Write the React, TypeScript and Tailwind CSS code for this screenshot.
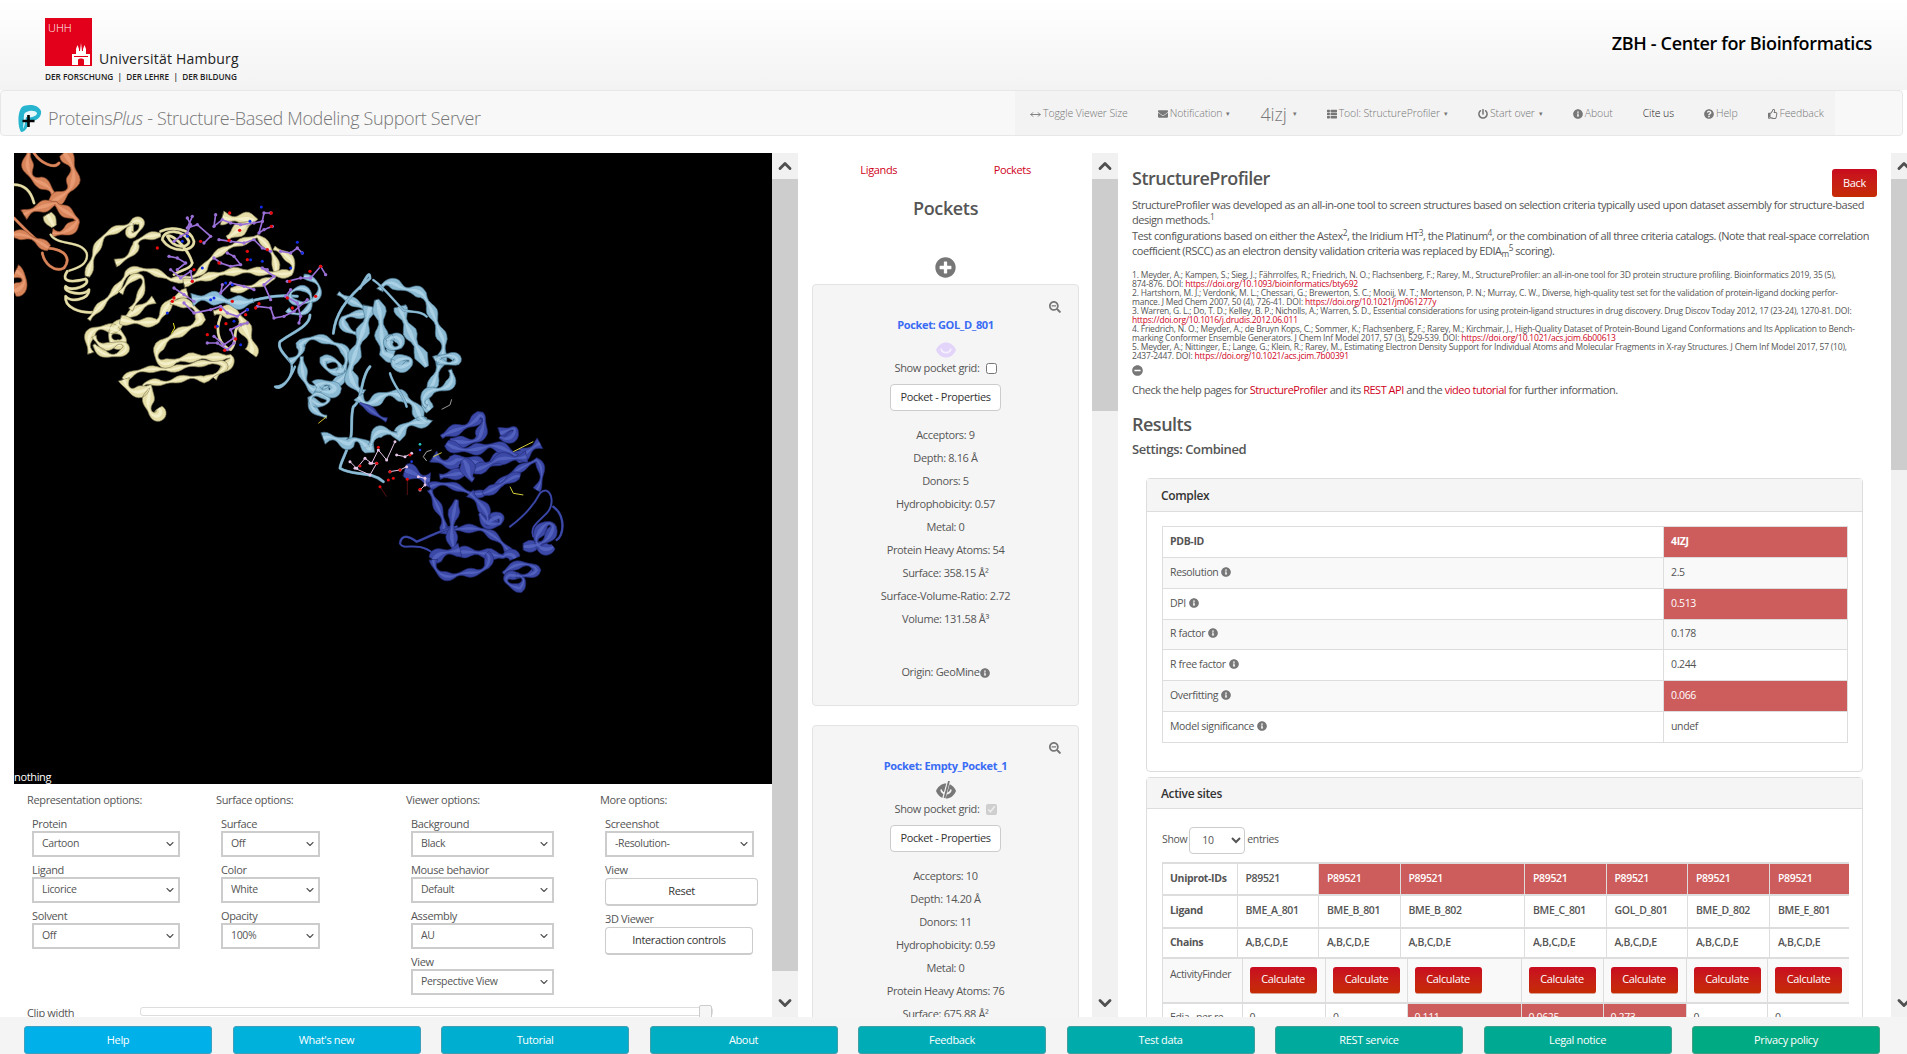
import React from 'react';
import { ChevronDown, ChevronUp, MoveHorizontal } from 'lucide-react';
import {
  FaEnvelope,
  FaInfoCircle,
  FaMinusCircle,
  FaPlusCircle,
  FaPowerOff,
  FaQuestionCircle,
  FaRegThumbsUp,
  FaSearchMinus,
  FaThList,
} from 'react-icons/fa';

type Ribbon = [string, number];
type Pt = [number, number];

const orange: Ribbon[] = [
  ['M45 0 C35 30 40 70 70 85 C100 95 120 110 125 150', 12],
  ['M150 0 C175 30 190 60 170 105 C150 130 130 135 110 150', 14],
  ['M30 185 C60 165 110 155 125 150 C135 170 190 190 190 205 C170 235 140 245 115 240', 12],
  ['M0 195 C30 225 60 260 100 285 C160 290 170 320 150 345 C120 360 90 330 85 300', 5],
  ['M0 245 C40 240 70 265 105 285', 10],
  ['M5 355 C40 370 40 400 0 415', 14],
  ['M60 0 C80 30 120 50 135 30', 5],
];

const cream: Ribbon[] = [
  ['M0 95 C30 95 50 110 60 150', 5],
  ['M100 185 L120 220', 12],
  ['M110 245 C130 280 200 260 218 300 C225 335 190 345 160 355', 4],
  ['M160 355 C145 375 150 395 215 378 C235 395 170 420 155 400 C145 420 210 430 225 410 C225 440 170 450 155 430 C150 465 200 480 235 478', 5],
  ['M220 370 C235 320 245 280 270 250 C300 225 340 225 360 205 C390 195 390 225 360 245 C340 250 345 235 355 210', 8],
  ['M305 330 C340 320 370 290 365 270 C390 245 415 250 440 245', 8],
  ['M225 500 C260 450 310 420 340 360 C370 340 420 350 470 380 C530 380 550 370 570 345 C600 290 680 270 730 250 C770 280 800 330 780 375 C730 395 700 410 650 410', 8],
  ['M440 235 C470 220 530 225 540 265 C540 300 470 300 445 260 C450 225 510 230 525 265 C525 285 480 290 460 250 C470 240 520 280 535 330 C530 350 500 350 480 365', 5],
  ['M510 390 C560 380 640 350 700 355 C740 350 790 370 830 360 C850 335 830 310 780 285', 9],
  ['M230 600 C215 560 225 530 260 525 C300 520 330 540 330 560 C320 590 280 570 290 540 C330 490 370 470 420 440', 10],
  ['M240 575 C260 610 310 620 335 590 C340 570 320 565 300 575 C270 590 250 575 240 550', 8],
  ['M320 500 C360 510 400 510 430 505 C440 500 460 430 520 420', 10],
  ['M320 420 C340 390 350 370 375 370 C400 370 390 420 350 470', 7],
  ['M470 450 C510 450 540 440 560 500 C540 530 460 540 430 590 C420 620 440 640 470 630 C540 600 590 620 650 610 C660 630 630 640 600 675', 10],
  ['M330 680 C360 650 400 645 470 650 C520 640 560 625 620 630 C650 640 620 660 570 680 C520 660 480 690 440 690 C400 680 370 700 400 710', 7],
  ['M330 680 C340 720 370 730 410 700 C405 740 395 750 410 780 C425 800 450 785 435 765', 12],
  ['M600 480 C630 470 680 470 690 520 C710 560 720 590 710 600', 14],
  ['M620 490 C600 540 620 580 650 590 C680 560 640 520 700 510', 5],
  ['M625 195 C640 200 680 195 720 200 L640 255', 14],
];

const skyLeft: Ribbon[] = [
  ['M720 442 C770 430 800 425 850 430', 5],
  ['M870 370 C920 380 930 420 900 440 C860 460 820 450 830 420 C860 390 900 410 890 450 C880 490 840 490 820 470', 6],
  ['M535 440 C580 430 610 435 640 445 C680 452 700 448 718 442', 14],
];

const sky: Ribbon[] = [
  ['M120 165 C120 200 60 220 30 245 C20 265 50 290 65 310', 5],
  ['M65 310 C70 350 45 380 15 380 C30 395 60 360 75 320', 4],
  ['M60 305 C90 290 100 270 90 255 C120 225 150 230 190 250 C230 260 240 290 220 330 C190 345 160 330 160 300 C190 290 220 310 210 340', 9],
  ['M95 290 C95 340 100 370 130 390 C180 385 210 370 235 330', 10],
  ['M120 410 C130 440 170 440 175 420 C170 400 130 390 120 420 C125 460 165 470 170 470', 8],
  ['M140 380 C160 360 190 370 195 385 C190 400 160 400 140 385', 14],
  ['M205 100 C240 125 280 135 290 155 C280 170 250 155 220 175 C210 200 240 220 280 225', 9],
  ['M190 220 C195 170 220 120 300 55 C300 30 290 50 270 85', 5],
  ['M300 140 C290 190 260 260 240 330 C240 370 265 390 280 400', 14],
  ['M330 90 C340 70 350 60 380 75 C420 100 430 80 460 105 C490 150 500 200 520 240 C525 280 510 310 490 370 C470 400 460 430 480 450', 11],
  ['M320 120 C340 180 330 230 340 280 L370 290', 14],
  ['M390 140 C400 180 430 240 470 320', 14],
  ['M310 60 C340 80 370 120 400 150 C430 160 450 150 470 170', 4],
  ['M350 240 C380 220 400 240 390 260 C360 280 340 240 370 230', 10],
  ['M370 310 C400 290 430 290 420 310 C390 330 360 320 370 300', 12],
  ['M495 300 C530 275 570 290 560 305 C530 320 510 300 500 300', 9],
  ['M540 330 C560 370 530 390 490 390 C460 400 450 430 470 440', 10],
  ['M300 320 C270 350 280 420 250 440 C240 470 250 520 240 540 C230 580 210 610 210 625 C250 650 300 630 340 665', 5],
  ['M160 535 C190 520 230 560 240 550 C260 520 290 560 300 570 C310 510 330 500 385 530 C400 480 440 490 480 485 C430 480 460 440 410 420 C380 390 340 400 320 420 C290 440 280 430 265 410', 12],
  ['M360 340 C370 380 400 400 410 440', 4],
];

const navy: Ribbon[] = [
  ['M270 430 C310 450 320 470 350 480', 7],
  ['M405 630 C440 640 460 660 480 660', 16],
  ['M490 590 C520 610 540 620 560 600 C600 590 630 620 650 620 C680 600 720 570 750 590 C770 580 790 560 810 550', 14],
  ['M515 530 C560 500 600 510 630 465 C650 470 640 500 630 530 C620 550 570 550 540 540', 12],
  ['M530 550 C570 580 620 570 650 560 C670 550 720 570 740 590', 12],
  ['M690 520 C720 510 730 500 735 510 C730 540 700 540 690 530', 12],
  ['M510 650 C560 640 620 640 680 600 C700 590 730 600 770 590', 12],
  ['M580 600 C600 620 590 650 610 660', 16],
  ['M480 680 C520 660 560 680 600 700 C640 710 660 690 690 670 C720 640 760 620 800 600 C820 620 820 660 800 690', 8],
  ['M480 690 C500 740 530 780 520 810 C560 810 600 800 640 810 C680 830 700 850 720 880', 9],
  ['M390 850 C395 820 420 830 440 845 C480 830 510 810 560 800', 4],
  ['M390 850 C400 875 440 840 490 880', 3],
  ['M600 700 C640 740 660 760 650 790 C690 760 700 770 690 790 C650 800 640 780 630 760', 12],
  ['M560 720 C540 800 540 850 560 880 C580 870 640 880 700 890 C710 880 730 880 735 895', 12],
  ['M490 900 C510 870 540 880 570 870', 14],
  ['M490 900 C490 940 530 960 560 945 C600 930 620 950 650 920 C660 900 660 890 650 880', 9],
  ['M700 940 C740 900 790 910 800 930 C790 950 750 950 720 945 C690 960 720 980 750 985 C770 960 760 950 740 945', 9],
  ['M760 860 C800 860 840 850 850 800 C840 780 820 790 800 830 C790 860 830 880 850 860', 12],
  ['M720 800 C760 770 790 740 810 700 C840 670 860 730 830 760 C800 790 780 800 790 830', 3],
  ['M850 740 C890 770 880 830 860 840', 4],
  ['M640 700 C700 680 730 640 750 650', 10],
];

const purpleChains = [
  '520,195 530,215 520,240 500,250 480,265',
  '535,190 520,225 550,215 590,250 570,270',
  '465,310 490,315 515,330 490,350',
  '470,350 500,375 530,355 535,385',
  '605,185 600,220 625,200 650,210 680,215 720,210 745,205 750,180 770,180',
  '745,205 735,240 750,230 775,220',
  '615,260 650,265 690,270 720,260 745,285 770,295',
  '640,300 660,310 680,335 650,340 620,330 600,315',
  '800,295 830,300 850,285 865,300',
  '760,350 745,345 780,370 750,395 770,440',
  '820,385 860,375 890,375 920,340 935,365',
  '830,410 815,430 850,450 860,490 855,510',
  '730,460 770,465 780,495 810,490 840,475 880,440',
  '480,405 510,425 540,445',
  '510,450 540,480 590,470 620,460 640,480 670,490 700,470',
  '600,550 630,575 660,555 650,530 680,515 700,510',
  '580,570 610,570 640,590 660,570',
  '625,395 620,420 650,390 690,400 720,410',
];

const redDots = '647,180 677,232 772,220 772,180 645,262 615,330 540,350 535,385 430,285 560,265 700,295 700,320 760,290 888,355 920,340 827,385 905,430 820,435 835,465 735,452 725,465 620,470 580,545 605,522 636,512 632,592 665,558 475,445 480,435 655,445 695,485';
const blueDots = '742,162 708,205 850,268 865,300 590,440 520,250 505,265 660,505 710,320 745,325 700,470 830,345 635,390 655,395 565,345 460,480 680,575 610,520 600,435';

const pinkChains = [
  '240,605 260,625 285,595 305,610 325,570 350,600 375,545',
  '380,585 405,590 425,580',
  '445,650 465,655 465,675 450,690',
  '360,635 390,630 410,620',
  '300,610 320,610 300,645 255,625',
];
const pinkRed = '325,562 320,610 270,618 360,635 370,655 355,660 390,630 412,658 450,688 330,680 420,585';

function toPoints(list: string) {
  return list.split(' ').map((p) => p.split(',').map(Number));
}

// walk an M/C/L path into points so the ribbon outline can vary in width
function samplePath(d: string): Pt[] {
  const tokens = d.match(/[MCL]|-?\d+(?:\.\d+)?/g) ?? [];
  const pts: Pt[] = [];
  let cur: Pt = [0, 0];
  let i = 0;
  let cmd = 'M';
  const num = () => Number(tokens[i++]);
  while (i < tokens.length) {
    if (/[MCL]/.test(tokens[i])) cmd = tokens[i++];
    if (cmd === 'M' || cmd === 'L') {
      const next: Pt = [num(), num()];
      if (cmd === 'L') {
        for (let t = 1; t <= 10; t++) {
          pts.push([cur[0] + (next[0] - cur[0]) * (t / 10), cur[1] + (next[1] - cur[1]) * (t / 10)]);
        }
      } else {
        pts.push(next);
      }
      cur = next;
    } else {
      const a: Pt = [num(), num()];
      const b: Pt = [num(), num()];
      const c: Pt = [num(), num()];
      for (let t = 1; t <= 14; t++) {
        const u = t / 14;
        const v = 1 - u;
        pts.push([
          v * v * v * cur[0] + 3 * v * v * u * a[0] + 3 * v * u * u * b[0] + u * u * u * c[0],
          v * v * v * cur[1] + 3 * v * v * u * a[1] + 3 * v * u * u * b[1] + u * u * u * c[1],
        ]);
      }
      cur = c;
    }
  }
  return pts;
}

function ribbonOutline(pts: Pt[], width: number, seed: number) {
  const left: string[] = [];
  const right: string[] = [];
  let run = seed * 23;
  pts.forEach((p, i) => {
    const a = pts[Math.max(i - 1, 0)];
    const b = pts[Math.min(i + 1, pts.length - 1)];
    const dx = b[0] - a[0];
    const dy = b[1] - a[1];
    const len = Math.hypot(dx, dy) || 1;
    if (i > 0) run += Math.hypot(p[0] - pts[i - 1][0], p[1] - pts[i - 1][1]);
    // twist: the ribbon narrows to an edge every so often
    const twist = Math.sin((run / 75) * Math.PI);
    const half = (width / 2) * (0.3 + 0.7 * twist * twist);
    left.push(`${(p[0] - (dy / len) * half).toFixed(1)} ${(p[1] + (dx / len) * half).toFixed(1)}`);
    right.push(`${(p[0] + (dy / len) * half).toFixed(1)} ${(p[1] - (dx / len) * half).toFixed(1)}`);
  });
  return `M${left.join('L')}L${right.reverse().join('L')}Z`;
}

function Ribbons({ items, edge, fill, shine }: { items: Ribbon[]; edge: string; fill: string; shine: string }) {
  return (
    <g strokeLinejoin="round" strokeLinecap="round">
      {items.map(([d, raw], i) => {
        if (raw <= 5) {
          return (
            <g key={i} fill="none">
              <path d={d} stroke={edge} strokeWidth={raw * 1.4 + 2} />
              <path d={d} stroke={fill} strokeWidth={raw * 1.4} />
            </g>
          );
        }
        const pts = samplePath(d);
        const w = raw * 3;
        return (
          <g key={i}>
            <path d={ribbonOutline(pts, w, i)} fill={fill} stroke={edge} strokeWidth={2} />
            <path d={ribbonOutline(pts, w * 0.3, i)} fill={shine} opacity={0.65} />
          </g>
        );
      })}
    </g>
  );
}

function Dots({ list, color, r }: { list: string; color: string; r: number }) {
  return (
    <g fill={color}>
      {toPoints(list).map(([x, y], i) => (
        <circle key={i} cx={x} cy={y} r={r} />
      ))}
    </g>
  );
}

function Chains({ list, color, r, width }: { list: string[]; color: string; r: number; width: number }) {
  return (
    <g>
      {list.map((pts, i) => (
        <g key={i}>
          <polyline points={pts} fill="none" stroke={color} strokeWidth={width} />
          <Dots list={pts} color={color} r={r} />
        </g>
      ))}
    </g>
  );
}

// protein cartoon, paths are traced in 3x coordinates of the two crops
function Molecule() {
  return (
    <svg viewBox="0 0 758 631" className="block w-full h-full">
      <g transform="scale(0.3333)">
        <Ribbons items={orange} edge="#8a4a2a" fill="#d9855c" shine="#efa67f" />
        <Ribbons items={cream} edge="#85805a" fill="#e6dea8" shine="#fbf7d8" />
        <Ribbons items={skyLeft} edge="#4f7f99" fill="#8dbdd8" shine="#bfe0f0" />
        <Chains list={purpleChains} color="#9a70d8" r={5} width={5} />
        <Dots list={redDots} color="#e80b0b" r={5} />
        <Dots list={blueDots} color="#0f2ce8" r={4.5} />
        <path d="M478 510 L482 525 L472 542" stroke="#e8e020" strokeWidth="3" fill="none" />
      </g>
      <g transform="translate(256 107) scale(0.3333)">
        <Ribbons items={sky} edge="#4d7c96" fill="#8dbbd4" shine="#b9dcec" />
        <Ribbons items={navy} edge="#232c78" fill="#3c49a6" shine="#5f6ecb" />
        <g fill="none" strokeWidth="3">
          <path d="M730 575 L790 545" stroke="#d8d040" />
          <path d="M720 680 L730 700 L760 705" stroke="#d8d040" />
          <path d="M490 590 L515 578" stroke="#d8d040" />
          <path d="M145 490 L170 470" stroke="#d8c030" />
          <path d="M470 603 L460 590 L470 575 L485 570" stroke="#aaa" />
          <path d="M515 448 L540 435 L545 418" stroke="#999" />
          <path d="M330 680 L350 710 M412 658 L412 705" stroke="#511" />
        </g>
        <Chains list={pinkChains} color="#e6c6e8" r={4.5} width={3} />
        <Dots list={pinkRed} color="#e80b0b" r={4.5} />
        <Dots list="425,605 450,570" color="#2238e0" r={4} />
        <Dots list="450,553" color="#22c8c0" r={4} />
      </g>
    </svg>
  );
}

function Scrollbar({ thumb, rest }: { thumb: string; rest: string }) {
  return (
    <div className="w-[26px] shrink-0 h-full flex flex-col bg-[#f1f1f1]">
      <div className="h-[26px] flex items-center justify-center">
        <ChevronUp size={20} strokeWidth={3.4} className="text-[#505050]" />
      </div>
      <div className={`${thumb} bg-[#cdcdcd]`} />
      <div className={rest} />
      <div className="h-[26px] flex items-center justify-center mt-auto -translate-y-[1px]">
        <ChevronDown size={20} strokeWidth={3.4} className="text-[#505050]" />
      </div>
    </div>
  );
}

function Field({ label, value, width }: { label: string; value: string; width: string }) {
  return (
    <div className="mb-[6px] ml-[5px]">
      <div className="h-[14px] leading-[14px] text-[11px] text-[#555] whitespace-nowrap">{label}</div>
      <div className={`${width} relative`}>
        <select
          defaultValue={value}
          className="w-full h-[26px] block appearance-none border-2 border-[#ccc] bg-white pl-[8px] text-[10.5px] text-[#555] rounded-none"
        >
          <option>{value}</option>
        </select>
        <ChevronDown size={12} strokeWidth={2.2} className="absolute right-[4px] top-[7px] text-[#555] pointer-events-none" />
      </div>
    </div>
  );
}

function ViewerOptions() {
  return (
    <div className="flex pl-[27px] pt-[9px] text-[#555] h-[233px] overflow-hidden relative">
      <div className="w-[189px] shrink-0">
        <div className="h-[14px] leading-[14px] mb-[10px] text-[11px]">Representation options:</div>
        <Field label="Protein" value="Cartoon" width="w-[148px]" />
        <Field label="Ligand" value="Licorice" width="w-[148px]" />
        <Field label="Solvent" value="Off" width="w-[148px]" />
      </div>
      <div className="w-[190px] shrink-0">
        <div className="h-[14px] leading-[14px] mb-[10px] text-[11px]">Surface options:</div>
        <Field label="Surface" value="Off" width="w-[99px]" />
        <Field label="Color" value="White" width="w-[99px]" />
        <Field label="Opacity" value="100%" width="w-[99px]" />
      </div>
      <div className="w-[194px] shrink-0">
        <div className="h-[14px] leading-[14px] mb-[10px] text-[11px]">Viewer options:</div>
        <Field label="Background" value="Black" width="w-[143px]" />
        <Field label="Mouse behavior" value="Default" width="w-[143px]" />
        <Field label="Assembly" value="AU" width="w-[143px]" />
        <Field label="View" value="Perspective View" width="w-[143px]" />
      </div>
      <div className="w-[160px] shrink-0">
        <div className="h-[14px] leading-[14px] mb-[10px] text-[11px]">More options:</div>
        <Field label="Screenshot" value="-Resolution-" width="w-[149px]" />
        <div className="ml-[5px]">
          <div className="h-[14px] leading-[14px] text-[11px]">View</div>
          <button className="w-[153px] h-[28px] bg-white border border-[#ccc] border-b-2 rounded-[4px] text-[11px] text-[#333]">Reset</button>
          <div className="h-[14px] leading-[14px] mt-[6px] text-[11px]">3D Viewer</div>
          <button className="w-[148px] h-[28px] bg-white border border-[#ccc] border-b-2 rounded-[4px] text-[11px] text-[#333]">Interaction controls</button>
        </div>
      </div>
      <div className="absolute left-[27px] top-[222px] text-[11px] leading-[14px]">Clip width</div>
      <div className="absolute left-[140px] top-[223px] w-[573px] h-[9px] border border-[#ddd] rounded-[3px] bg-white">
        <div className="absolute right-0 -top-[3px] w-[13px] h-[14px] bg-[#f6f6f6] border border-[#ccc] rounded-[2px]" />
      </div>
    </div>
  );
}

function Eye({ off }: { off?: boolean }) {
  const color = off ? '#777' : '#e3d4fa';
  return (
    <svg width="20" height="20" viewBox="0 0 20 20" className="block">
      <path d="M0 10 C4 0 16 0 20 10 C16 20 4 20 0 10 Z" fill={color} />
      <path d="M5 8.5 C6 14 14 14 15 8.5" fill="none" stroke={off ? '#f5f5f5' : '#f6effe'} strokeWidth="1.6" />
      {off && <path d="M12.5 1 L7.5 19" stroke="#f5f5f5" strokeWidth="3.4" />}
      {off && <path d="M13 0 L8.5 17" stroke="#777" strokeWidth="1.8" />}
    </svg>
  );
}

function PocketCard({ title, off, rows, origin }: { title: string; off?: boolean; rows: React.ReactNode[]; origin?: boolean }) {
  return (
    <div className="mx-[13px] mb-[19px] bg-[#f5f5f5] border border-[#e3e3e3] rounded-[4px] pt-[16px] pb-[21px] text-center text-[11px] text-[#555]">
      <div className="h-[14px] flex justify-end pr-[17px]">
        <FaSearchMinus size={12} className="text-[#777]" />
      </div>
      <div className="h-[20px] leading-[20px] font-bold text-[#3a6cf4] text-[11px]">{title}</div>
      <div className="h-[20px] mt-[5px] flex justify-center"><Eye off={off} /></div>
      <div className="h-[16px] flex items-center justify-center gap-[6px]">
        <span>Show pocket grid:</span>
        <input type="checkbox" defaultChecked={off} disabled={off} className="w-[11px] h-[11px] m-0" />
      </div>
      <button className="mt-[8px] w-[111px] h-[27px] bg-white border border-[#ccc] rounded-[4px] text-[11px] text-[#333]">Pocket - Properties</button>
      <div className="mt-[12px]">
        {rows.map((r, i) => (
          <div key={i} className="h-[23px] leading-[23px]">{r}</div>
        ))}
      </div>
      {origin && (
        <div className="mt-[31px] h-[23px] flex items-center justify-center">
          Origin: GeoMine<FaInfoCircle size={10} className="text-[#777]" />
        </div>
      )}
    </div>
  );
}

function Info({ className = '' }: { className?: string }) {
  return <FaInfoCircle size={10} className={`inline-block ml-[3px] align-[-1px] text-[#777] ${className}`} />;
}

const complexRows: [React.ReactNode, string, boolean, string][] = [
  ['Resolution', '2.5', false, 'h-[31px]'],
  ['DPI', '0.513', true, 'h-[31px]'],
  ['R factor', '0.178', false, 'h-[30px]'],
  ['R free factor', '0.244', false, 'h-[31px]'],
  ['Overfitting', '0.066', true, 'h-[31px]'],
  ['Model significance', 'undef', false, 'h-[31px]'],
];

const headCols = ['w-[74.5px]', 'w-[81.5px]', 'w-[81.5px]', 'w-[124.5px]', 'w-[81.5px]', 'w-[81.5px]', 'w-[82px]', 'w-[79.5px]'];
const bodyCols = ['w-[79.5px]', 'w-[83.5px]', 'w-[81.5px]', 'w-[114px]', 'w-[82px]', 'w-[83px]', 'w-[81.5px]', 'w-[81.5px]'];
const ligands = ['BME_A_801', 'BME_B_801', 'BME_B_802', 'BME_C_801', 'GOL_D_801', 'BME_D_802', 'BME_E_801'];
const edia = ['0', '0', '0.111', '0.0625', '0.273', '0', '0'];
const redHead = 'bg-[#cd5c5c] text-white';

const footerButtons: [string, string][] = [
  ['Help', 'bg-[#00b1e9] border-[#3f9fc0]'],
  ["What's new", 'bg-[#00b1dc] border-[#3f9fb8]'],
  ['Tutorial', 'bg-[#00afd0] border-[#3f9fb0]'],
  ['About', 'bg-[#00aec3] border-[#3f9fa8]'],
  ['Feedback', 'bg-[#00adb7] border-[#3f9fa4]'],
  ['Test data', 'bg-[#00acab] border-[#3f9f9c]'],
  ['REST service', 'bg-[#00ab9e] border-[#3f9f94]'],
  ['Legal notice', 'bg-[#00aa92] border-[#3f9f8c]'],
  ['Privacy policy', 'bg-[#00aa82] border-[#3f9f80]'],
];

function Header() {
  return (
    <div className="h-[90px] bg-gradient-to-b from-white to-[#f3f3f3] flex justify-between shrink-0 tracking-normal">
      <div className="pl-[45px] pt-[18px]">
        <div className="flex items-end">
          <div className="w-[47px] h-[48px] bg-[#e2001a] flex flex-col justify-between">
            <span className="text-white text-[11px] font-light leading-[14px] pl-[3px] pt-[3px]">UHH</span>
            <svg width="18" height="22" viewBox="0 0 18 22" className="self-end mr-[2px] mb-[1px]" fill="#fff">
              <path d="M0 22 V11 H4 V6 L5.5 2 L7 6 V8 H8 L9 0 L10 8 H11 V6 L12.5 2 L14 6 V11 H18 V22 H12 V17 C12 15 6 15 6 17 V22 Z" />
              <path d="M2 13 H16 V14 H2 Z" fill="#e2001a" />
            </svg>
          </div>
          <span className="ml-[7px] text-[14px] leading-[17px] text-[#222] -mb-[1px] tracking-[0.2px]">Universität Hamburg</span>
        </div>
        <div className="mt-[5px] text-[8.2px] leading-[11px] font-semibold text-[#222] whitespace-nowrap">DER FORSCHUNG &nbsp;|&nbsp; DER LEHRE &nbsp;|&nbsp; DER BILDUNG</div>
      </div>
      <div className="pr-[35px] pt-[31px] text-[18px] leading-[24px] font-semibold text-black tracking-[-0.35px]">ZBH - Center for Bioinformatics</div>
    </div>
  );
}

function NavBar() {
  const item = 'flex items-center gap-[2px] whitespace-nowrap text-[#777]';
  return (
    <div className="h-[46px] w-[1903px] shrink-0 flex items-center bg-[#f8f8f8] border border-[#e7e7e7] rounded-[4px]">
      <svg width="24" height="28" viewBox="0 0 24 28" className="ml-[17px] mt-[12px] shrink-0">
        <path d="M3 27 C-1 20 0 6 4 2 C9 -1 20 -1 23 6 C24 13 17 17 11 16 C10 21 8 27 3 27 Z" fill="#27b4cf" />
        <path d="M6 10 C6 6 17 4 19 8 C19 11 14 13 8 12 C7 17 7 21 5 24 Z" fill="#e8f8fb" />
        <path d="M10.5 10 V22 M4.5 16 H16.5" stroke="#000" strokeWidth="2.6" />
      </svg>
      <div className="ml-[6px] mt-[11px] text-[18px] font-light text-[#777] whitespace-nowrap tracking-[-0.35px]">Proteins<i>Plus</i> - Structure-Based Modeling Support Server</div>
      <div className="ml-auto mr-[67px] w-[820px] h-[44px] bg-[#f3f3f3] flex items-center pl-[15px] pt-[2px] gap-[30px] text-[10.5px] font-light tracking-[-0.1px]">
        <span className={item}><MoveHorizontal size={11} />Toggle Viewer Size</span>
        <span className={item}><FaEnvelope size={10} />Notification <span className="text-[7px] ml-[2px]">▾</span></span>
        <span className={item}><span className="text-[18px] leading-[24px]">4izj</span><span className="text-[7px] ml-[4px]">▾</span></span>
        <span className={item}><FaThList size={10} />Tool: StructureProfiler <span className="text-[7px] ml-[2px]">▾</span></span>
        <span className={item}><FaPowerOff size={10} />Start over <span className="text-[7px] ml-[2px]">▾</span></span>
        <span className={item}><FaInfoCircle size={10} />About</span>
        <span className="whitespace-nowrap text-[#222]">Cite us</span>
        <span className={item}><FaQuestionCircle size={10} />Help</span>
        <span className={item}><FaRegThumbsUp size={10} />Feedback</span>
      </div>
    </div>
  );
}

function ComplexPanel() {
  return (
    <div className="mr-[28px] ml-[28px] border border-[#ddd] rounded-[4px] pb-[28px]">
      <div className="h-[33px] leading-[33px] pl-[14px] bg-[#f5f5f5] border-b border-[#ddd] text-[12px] font-semibold text-[#333]">Complex</div>
      <div className="pt-[14px] px-[15px]">
        <table className="w-[686px] table-fixed border-collapse text-[10.5px] text-[#555]">
          <colgroup>
            <col className="w-[501px]" />
            <col />
          </colgroup>
          <tbody>
            <tr className="h-[31px]">
              <td className="border border-[#ddd] pl-[7px] font-bold">PDB-ID</td>
              <td className="border border-[#ddd] pl-[7px] font-bold bg-[#cd5c5c] text-white">4IZJ</td>
            </tr>
            {complexRows.map(([label, value, bad, h], i) => (
              <tr key={i} className={`${h} ${i % 2 === 0 ? 'bg-[#f9f9f9]' : 'bg-white'}`}>
                <td className="border border-[#ddd] pl-[7px]">{label}<Info /></td>
                <td className={`border border-[#ddd] pl-[7px] ${bad ? 'bg-[#cd5c5c] text-white' : ''}`}>{value}</td>
              </tr>
            ))}
          </tbody>
        </table>
      </div>
    </div>
  );
}

function ActiveSitesPanel() {
  return (
    <div className="mt-[5px] mr-[28px] ml-[28px] border border-[#ddd] rounded-[4px]">
      <div className="h-[31px] leading-[31px] pl-[14px] bg-[#f5f5f5] border-b border-[#ddd] text-[12px] font-semibold text-[#333]">Active sites</div>
      <div className="pt-[18px] px-[15px]">
        <div className="flex items-center h-[27px] text-[10.5px] text-[#555] gap-[2px]">
          <span>Show</span>
          <select defaultValue="10" className="w-[56px] h-[27px] border border-[#ccc] rounded-[4px] bg-white pl-[8px] text-[10.5px]">
            <option>10</option>
          </select>
          <span>entries</span>
        </div>
        <table className="mt-[8px] w-[686px] table-fixed border-collapse text-[10.5px] text-[#555]">
          <colgroup>
            {headCols.map((c, i) => <col key={i} className={c} />)}
          </colgroup>
          <thead>
            <tr className="h-[32px] border-t-2 border-[#ddd] border-b-2">
              <th className="border-l border-[#ddd] pl-[7px] text-left font-bold">Uniprot-IDs</th>
              <td className="border-l border-[#ddd] pl-[8px] font-semibold">P89521</td>
              {ligands.slice(1).map((_, i) => (
                <td key={i} className={`border-l border-[#ddd] pl-[8px] font-semibold ${redHead}`}>P89521</td>
              ))}
            </tr>
            <tr className="h-[33px] border-b-2 border-[#ddd]">
              <th className="border-l border-[#ddd] pl-[7px] text-left font-bold">Ligand</th>
              {ligands.map((l) => (
                <td key={l} className="border-l border-[#ddd] pl-[8px] font-semibold">{l}</td>
              ))}
            </tr>
            <tr className="h-[30px] border-b-2 border-[#ddd]">
              <th className="border-l border-[#ddd] pl-[7px] text-left font-bold">Chains</th>
              {ligands.map((l) => (
                <td key={l} className="border-l border-[#ddd] pl-[8px] font-semibold">A,B,C,D,E</td>
              ))}
            </tr>
          </thead>
        </table>
        <table className="w-[686px] table-fixed border-collapse text-[10.5px] text-[#555]">
          <colgroup>
            {bodyCols.map((c, i) => <col key={i} className={c} />)}
          </colgroup>
          <tbody>
            <tr className="h-[44px] bg-[#f9f9f9] border-b-2 border-[#ddd]">
              <td className="border-l border-[#ddd] pl-[7px] align-top pt-[8px]">ActivityFinder</td>
              {ligands.map((l) => (
                <td key={l} className="border-l border-[#ddd] pl-[7px]">
                  <button className="block w-[67px] h-[27px] rounded-[3px] bg-gradient-to-b from-[#c90a1f] to-[#c52b04] text-white text-[11px] border-b border-[#d8a090]">Calculate</button>
                </td>
              ))}
            </tr>
            <tr className="h-[44px]">
              <td className="border-l border-[#ddd] pl-[7px] align-top pt-[6px]">Edia_ per re-<br />sidue</td>
              {edia.map((v, i) => (
                <td key={i} className={`border-l border-[#ddd] pl-[7px] align-top pt-[6px] ${v !== '0' ? 'bg-[#cd5c5c] text-white' : ''}`}>{v}</td>
              ))}
            </tr>
          </tbody>
        </table>
      </div>
    </div>
  );
}

export default function App() {
  const link = 'text-[#d0021b]';
  return (
    <div className="w-[1907px] h-[1054px] overflow-hidden flex flex-col bg-white font-['Open_Sans',sans-serif] font-normal tracking-[-0.35px]">
      <Header />
      <NavBar />
      <div className="h-[17px] shrink-0" />
      <div className="flex h-[864px] shrink-0 overflow-hidden">
        {/* viewer column */}
        <div className="w-[772px] shrink-0 pl-[14px] overflow-hidden">
          <div className="w-[758px] h-[631px] bg-black relative overflow-hidden">
            <Molecule />
            <span className="absolute left-0 bottom-0 text-[11px] leading-[14px] text-white">nothing</span>
          </div>
          <div className="-ml-[14px]"><ViewerOptions /></div>
        </div>
        <Scrollbar thumb="h-[792px]" rest="flex-1" />
        <div className="w-[1px] shrink-0" />

        {/* pockets column */}
        <div className="w-[293px] shrink-0 overflow-hidden">
          <div className="grid grid-cols-2 px-[13px] pt-[9px] text-center text-[11px] text-[#d0021b]">
            <span className="leading-[16px]">Ligands</span>
            <span className="leading-[16px]">Pockets</span>
          </div>
          <div className="mt-[17px] text-center text-[18px] leading-[26px] font-semibold text-[#555]">Pockets</div>
          <div className="mt-[36px] mb-[6px] flex justify-center"><FaPlusCircle size={21} className="text-[#777]" /></div>
          <PocketCard
            title="Pocket: GOL_D_801"
            origin
            rows={['Acceptors: 9', 'Depth: 8.16 Å', 'Donors: 5', 'Hydrophobicity: 0.57', 'Metal: 0', 'Protein Heavy Atoms: 54', <>Surface: 358.15 Å²</>, 'Surface-Volume-Ratio: 2.72', <>Volume: 131.58 Å³</>]}
          />
          <PocketCard
            title="Pocket: Empty_Pocket_1"
            off
            rows={['Acceptors: 10', 'Depth: 14.20 Å', 'Donors: 11', 'Hydrophobicity: 0.59', 'Metal: 0', 'Protein Heavy Atoms: 76', <>Surface: 675.88 Å²</>]}
          />
        </div>
        <Scrollbar thumb="h-[232px]" rest="flex-1" />

        {/* results column */}
        <div className="w-[773px] shrink-0 overflow-hidden text-[#555]">
          <div className="pl-[14px] pt-[16px]">
            <div className="flex justify-between items-start h-[28px] pr-[14px]">
              <div className="text-[18px] leading-[18px] font-semibold tracking-[-0.5px]">StructureProfiler</div>
              <button className="w-[45px] h-[28px] rounded-[3px] bg-gradient-to-b from-[#c90a1f] to-[#c52b04] text-white text-[11px]">Back</button>
            </div>
            <div className="text-[11px] leading-[15.4px] whitespace-nowrap tracking-[-0.47px]">
              StructureProfiler was developed as an all-in-one tool to screen structures based on selection criteria typically used upon dataset assembly for structure-based<br />
              design methods.<sup>1</sup><br />
              Test configurations based on either the Astex<sup>2</sup>, the Iridium HT<sup>3</sup>, the Platinum<sup>4</sup>, or the combination of all three criteria catalogs. (Note that real-space correlation<br />
              coefficient (RSCC) as an electron density validation criteria was replaced by EDIA<sub>m</sub><sup>5</sup> scoring).
            </div>
            <div className="mt-[11px] text-[8.5px] leading-[9px] whitespace-nowrap tracking-[-0.2px]">
              1. Meyder, A.; Kampen, S.; Sieg, J.; Fährrolfes, R.; Friedrich, N. O.; Flachsenberg, F.; Rarey, M., StructureProfiler: an all-in-one tool for 3D protein structure profiling. Bioinformatics 2019, 35 (5),<br />
              874-876. DOI: <span className={link}>https://doi.org/10.1093/bioinformatics/bty692</span><br />
              2. Hartshorn, M. J.; Verdonk, M. L.; Chessari, G.; Brewerton, S. C.; Mooij, W. T.; Mortenson, P. N.; Murray, C. W., Diverse, high-quality test set for the validation of protein-ligand docking perfor-<br />
              mance. J Med Chem 2007, 50 (4), 726-41. DOI: <span className={link}>https://doi.org/10.1021/jm061277y</span><br />
              3. Warren, G. L.; Do, T. D.; Kelley, B. P.; Nicholls, A.; Warren, S. D., Essential considerations for using protein-ligand structures in drug discovery. Drug Discov Today 2012, 17 (23-24), 1270-81. DOI:<br />
              <span className={link}>https://doi.org/10.1016/j.drudis.2012.06.011</span><br />
              4. Friedrich, N. O.; Meyder, A.; de Bruyn Kops, C.; Sommer, K.; Flachsenberg, F.; Rarey, M.; Kirchmair, J., High-Quality Dataset of Protein-Bound Ligand Conformations and Its Application to Bench-<br />
              marking Conformer Ensemble Generators. J Chem Inf Model 2017, 57 (3), 529-539. DOI: <span className={link}>https://doi.org/10.1021/acs.jcim.6b00613</span><br />
              5. Meyder, A.; Nittinger, E.; Lange, G.; Klein, R.; Rarey, M., Estimating Electron Density Support for Individual Atoms and Molecular Fragments in X-ray Structures. J Chem Inf Model 2017, 57 (10),<br />
              2437-2447. DOI: <span className={link}>https://doi.org/10.1021/acs.jcim.7b00391</span>
            </div>
            <FaMinusCircle size={11} className="mt-[5px] text-[#777]" />
            <div className="mt-[6px] text-[11px] leading-[16px] whitespace-nowrap tracking-[-0.47px]">
              Check the help pages for <span className={link}>StructureProfiler</span> and its <span className={link}>REST API</span> and the <span className={link}>video tutorial</span> for further information.
            </div>
            <div className="mt-[14px] text-[18px] leading-[24px] font-semibold tracking-[-0.5px]">Results</div>
            <div className="mt-[4px] text-[13px] leading-[18px] font-semibold tracking-[-0.4px]">Settings: Combined</div>
          </div>
          <div className="mt-[20px]">
            <ComplexPanel />
            <ActiveSitesPanel />
          </div>
        </div>
        <Scrollbar thumb="h-[291px]" rest="flex-1" />
      </div>

      <div className="h-[37px] shrink-0 bg-[#f4f4f4] flex pl-[24px] pt-[9px] gap-[20.5px] overflow-hidden">
        {footerButtons.map(([label, color]) => (
          <button key={label} className={`w-[188px] h-[28px] shrink-0 border rounded-[3px] text-white text-[11px] font-normal pt-[1px] ${color}`}>{label}</button>
        ))}
      </div>
    </div>
  );
}
